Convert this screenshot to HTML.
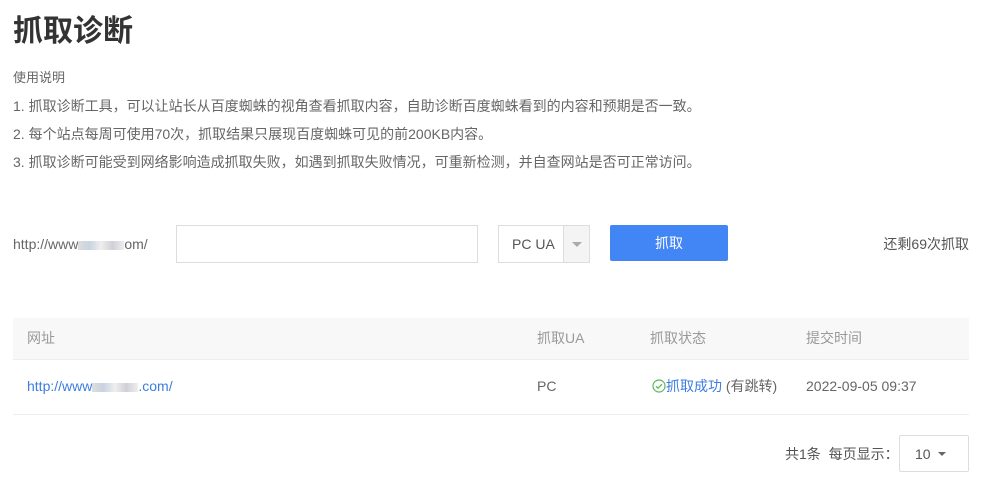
<!DOCTYPE html><html><head><meta charset="utf-8"><style>
*{margin:0;padding:0;box-sizing:border-box}
body{width:984px;height:489px;background:#fff;font-family:"Liberation Sans","Noto Sans CJK SC",sans-serif;color:#666;font-size:14px;line-height:20px;position:relative;overflow:hidden}
.a{position:absolute;white-space:nowrap}
h1{position:absolute;left:13px;top:12px;font-size:30px;font-weight:bold;color:#333;line-height:40px}
.blur{display:inline-block;width:46px;height:9px;background:linear-gradient(90deg,#ddd,#c9d3e0,#eee,#d0d0d8,#eee);vertical-align:middle}
</style></head><body>
<h1>抓取诊断</h1>
<div class="a" style="left:13px;top:68px;font-size:13px">使用说明</div>
<div class="a" style="left:13px;top:96px">1. 抓取诊断工具，可以让站长从百度蜘蛛的视角查看抓取内容，自助诊断百度蜘蛛看到的内容和预期是否一致。</div>
<div class="a" style="left:13px;top:124px">2. 每个站点每周可使用70次，抓取结果只展现百度蜘蛛可见的前200KB内容。</div>
<div class="a" style="left:13px;top:152px">3. 抓取诊断可能受到网络影响造成抓取失败，如遇到抓取失败情况，可重新检测，并自查网站是否可正常访问。</div>
<div class="a" style="left:13px;top:234px">http://www<span class="blur"></span>om/</div>
<div class="a" style="left:176px;top:225px;width:302px;height:38px;border:1px solid #ddd"></div>
<div class="a" style="left:498px;top:225px;width:92px;height:38px;border:1px solid #ddd"><span class="a" style="left:13px;top:8px;color:#555">PC UA</span><div class="a" style="left:64px;top:0;width:26px;height:36px;background:#f4f4f4;border-left:1px solid #ddd"><div class="a" style="left:8px;top:16px;border-left:5px solid transparent;border-right:5px solid transparent;border-top:5px solid #aaa"></div></div></div>
<div class="a" style="left:610px;top:225px;width:118px;height:36px;background:#4285f4;border-radius:2px;color:#fff;text-align:center;line-height:36px">抓取</div>
<div class="a" style="right:15px;top:234px;color:#555">还剩69次抓取</div>
<div class="a" style="left:13px;top:318px;width:956px;height:42px;background:#f8f8f8;border-bottom:1px solid #eee"></div>
<div class="a" style="left:27px;top:328px;color:#999">网址</div>
<div class="a" style="left:537px;top:328px;color:#999">抓取UA</div>
<div class="a" style="left:650px;top:328px;color:#999">抓取状态</div>
<div class="a" style="left:806px;top:328px;color:#999">提交时间</div>
<div class="a" style="left:13px;top:414px;width:956px;height:1px;background:#eee"></div>
<div class="a" style="left:27px;top:376px;color:#3b7de0">http://www<span class="blur"></span>.com/</div>
<div class="a" style="left:537px;top:376px">PC</div>
<div class="a" style="left:652px;top:376px"><svg width="14" height="14" viewBox="0 0 14 14" style="vertical-align:-2px"><circle cx="7" cy="7" r="6" fill="none" stroke="#5cb85c" stroke-width="1.2"/><path d="M4 7.2l2 2 4-4" fill="none" stroke="#5cb85c" stroke-width="1.3"/></svg><span style="color:#3b7de0">抓取成功</span> (有跳转)</div>
<div class="a" style="left:806px;top:376px">2022-09-05 09:37</div>
<div class="a" style="left:785px;top:444px;color:#555">共1条&nbsp; 每页显示：</div>
<div class="a" style="left:899px;top:435px;width:70px;height:37px;border:1px solid #ddd;border-radius:2px"><span class="a" style="left:15px;top:8px;color:#555">10</span><div class="a" style="left:38px;top:16px;border-left:4px solid transparent;border-right:4px solid transparent;border-top:4px solid #666"></div></div>
</body></html>
